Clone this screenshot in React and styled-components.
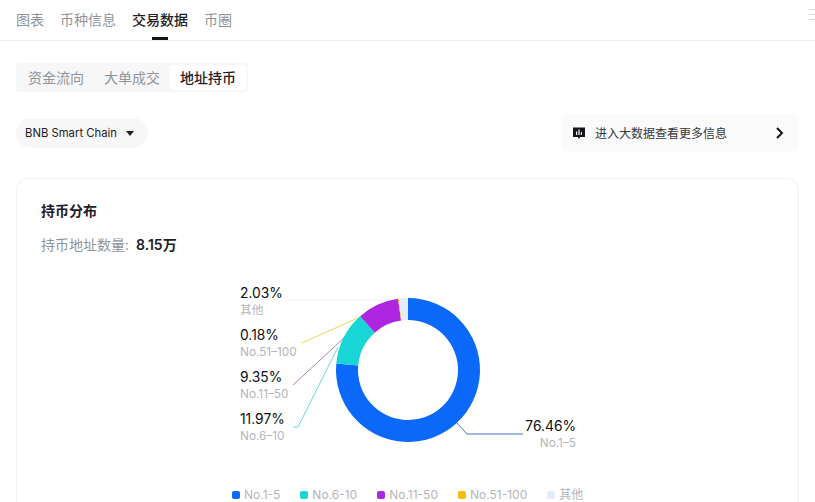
import React from "react"
import styled, { createGlobalStyle } from "styled-components"

const GlobalStyle = createGlobalStyle`
  html, body {
    margin: 0;
    padding: 0;
    width: 815px;
    height: 502px;
    overflow: hidden;
    background: #fff;
    font-family: Inter, "Noto Sans CJK SC", sans-serif;
    color: #1e2026;
  }
  * { box-sizing: border-box; }
`

const Page = styled.div`
  width: 815px;
  height: 502px;
  overflow: hidden;
`

const TopTabs = styled.div`
  position: relative;
  display: flex;
  gap: 16px;
  height: 41px;
  padding-left: 16px;
  border-bottom: 1px solid #eeeff1;
`

const TopTab = styled.div`
  position: relative;
  font-size: 14px;
  line-height: 40px;
  font-weight: ${p => (p.$active ? 500 : 400)};
  color: ${p => (p.$active ? "#1e2026" : "#8f949c")};

  &::after {
    content: "";
    display: ${p => (p.$active ? "block" : "none")};
    position: absolute;
    left: 20px;
    bottom: 0;
    width: 16px;
    height: 3px;
    background: #14151a;
  }
`

const MenuIcon = styled.div`
  position: absolute;
  left: 809px;
  top: 9px;
  width: 8px;
  height: 11px;
  border-top: 1px solid #d6d8db;
  border-bottom: 1px solid #d6d8db;

  &::after {
    content: "";
    position: absolute;
    left: 0;
    right: 0;
    top: 4px;
    height: 1px;
    background: #d6d8db;
  }
`

const Segmented = styled.div`
  display: inline-flex;
  margin: 22px 0 0 16px;
  padding: 2px;
  height: 29px;
  border-radius: 4px;
  background: #f7f7f8;
`

const Segment = styled.div`
  padding: 0 10px;
  font-size: 14px;
  line-height: 25px;
  border-radius: 3px;
  font-weight: ${p => (p.$active ? 500 : 400)};
  color: ${p => (p.$active ? "#1e2026" : "#8f949c")};
  background: ${p => (p.$active ? "#fff" : "transparent")};
`

const Toolbar = styled.div`
  display: flex;
  align-items: center;
  justify-content: space-between;
  margin: 21px 16px 0;
  height: 40px;
`

const ChainSelect = styled.div`
  display: flex;
  align-items: center;
  gap: 9px;
  width: 132px;
  height: 30px;
  padding-left: 9px;
  border-radius: 15px;
  background: #f7f7f8;
  font-size: 11.3px;
  color: #1e2026;
`

const Caret = styled.span`
  width: 0;
  height: 0;
  border-left: 4.5px solid transparent;
  border-right: 4.5px solid transparent;
  border-top: 5px solid #1e2026;
`

const DataLink = styled.div`
  display: flex;
  align-items: center;
  width: 238px;
  height: 38px;
  padding: 0 14px 0 12px;
  border-radius: 6px;
  background: #fafafa;
  font-size: 12px;
  color: #34373d;
`

const LinkLabel = styled.span`
  flex: 1;
  margin-left: 10px;
  margin-top: -1px;
`

const Card = styled.div`
  margin: 25px 16px 0;
  height: 340px;
  padding: 22px 24px 0;
  border: 1px solid #f0f1f2;
  border-radius: 12px;
`

const CardTitle = styled.div`
  font-size: 14px;
  font-weight: 700;
  line-height: 20px;
  color: #1e2026;
`

const CountRow = styled.div`
  display: flex;
  gap: 7px;
  margin-top: 14px;
  font-size: 14px;
  line-height: 20px;
  color: #8f949c;
`

const CountValue = styled.span`
  font-weight: 600;
  font-size: 14px;
  color: #1e2026;
`

const ChartArea = styled.div`
  position: relative;
  width: 783px;
  height: 240px;
  margin: 8px -24px 0;
`

const ChartSvg = styled.svg`
  position: absolute;
  left: 0;
  top: 0;
`

const Callout = styled.div`
  position: absolute;
  left: ${p => p.$x}px;
  top: ${p => p.$y}px;
  text-align: ${p => (p.$right ? "right" : "left")};
  width: ${p => (p.$right ? "60px" : "auto")};
`

const Percent = styled.div`
  font-size: 13.8px;
  line-height: 18px;
  font-weight: 400;
  color: #0c0d10;
  white-space: nowrap;
`

const SubLabel = styled.div`
  font-size: 11.8px;
  line-height: 16px;
  color: #b4b6ba;
  white-space: nowrap;
`

const Legend = styled.div`
  position: absolute;
  left: 215px;
  top: 224px;
  display: flex;
  gap: 20px;
`

const LegendItem = styled.div`
  display: flex;
  align-items: center;
  gap: 4px;
  font-size: 12px;
  line-height: 16px;
  color: #b4b6ba;
  white-space: nowrap;
`

const Swatch = styled.span`
  width: 8px;
  height: 8px;
  border-radius: 2px;
  background: ${p => p.$color};
`

const slices = [
  { value: 76.46, color: "#0a68fa", label: "No.1-5" },
  { value: 11.97, color: "#18d5d6", label: "No.6-10" },
  { value: 9.35, color: "#ad27e2", label: "No.11-50" },
  { value: 0.18, color: "#f5bd0c", label: "No.51-100" },
  { value: 2.03, color: "#e3ecf8", label: "其他" },
]

const callouts = [
  { x: 223, y: 106, pct: "2.03%", sub: "其他" },
  { x: 223, y: 148, pct: "0.18%", sub: "No.51–100" },
  { x: 223, y: 190, pct: "9.35%", sub: "No.11–50" },
  { x: 223, y: 232, pct: "11.97%", sub: "No.6–10" },
  { x: 499, y: 239, pct: "76.46%", sub: "No.1–5", right: true },
]

// chart area starts at x=17, y=263 in page coordinates
const CX = 391
const CY = 107

function arcPath(start, end) {
  const R = 72
  const r = 50
  const pt = (rad, pct) => {
    const a = (pct / 100) * Math.PI * 2
    return `${(CX + rad * Math.sin(a)).toFixed(2)} ${(CY - rad * Math.cos(a)).toFixed(2)}`
  }
  const large = end - start > 50 ? 1 : 0
  return `M${pt(R, start)} A${R} ${R} 0 ${large} 1 ${pt(R, end)} L${pt(r, end)} A${r} ${r} 0 ${large} 0 ${pt(r, start)} Z`
}

function Donut() {
  let acc = 0
  return (
    <ChartSvg width="783" height="240" viewBox="0 0 783 240">
      <polyline points="270,37 385,37" fill="none" stroke="#eef0f3" strokeWidth="1" />
      <polyline points="285,80 343,54" fill="none" stroke="#ecd65c" strokeWidth="1" />
      <polyline points="276,122 328,74" fill="none" stroke="#a883b8" strokeWidth="1" />
      <polyline points="276,164 281,164 321,84" fill="none" stroke="#62dcd8" strokeWidth="1" />
      <polyline points="440,160 450,171 506,171" fill="none" stroke="#3f78c4" strokeWidth="1" />
      {slices.map(s => {
        const d = arcPath(acc, acc + s.value)
        acc += s.value
        return <path key={s.label} d={d} fill={s.color} />
      })}
    </ChartSvg>
  )
}

export default function App() {
  return (
    <Page>
      <GlobalStyle />
      <TopTabs>
        <TopTab>图表</TopTab>
        <TopTab>币种信息</TopTab>
        <TopTab $active>交易数据</TopTab>
        <TopTab>币圈</TopTab>
        <MenuIcon />
      </TopTabs>

      <Segmented>
        <Segment>资金流向</Segment>
        <Segment>大单成交</Segment>
        <Segment $active>地址持币</Segment>
      </Segmented>

      <Toolbar>
        <ChainSelect>
          BNB Smart Chain
          <Caret />
        </ChainSelect>
        <DataLink>
          <svg width="12" height="13" viewBox="0 0 12 13">
            <path d="M0 0.5h12v9.5H7.2L6 12 4.800 10H0z" fill="#14151a" />
            <path d="M3 4.500h1.200V8H3zM5.400 2.500h1.200V8H5.400zM7.800 5h1.200v3H7.800z" fill="#fff" />
          </svg>
          <LinkLabel>进入大数据查看更多信息</LinkLabel>
          <svg width="10" height="12" viewBox="0 0 10 12">
            <path d="M2 1l5 5-5 5" fill="none" stroke="#14151a" strokeWidth="2" />
          </svg>
        </DataLink>
      </Toolbar>

      <Card>
        <CardTitle>持币分布</CardTitle>
        <CountRow>
          持币地址数量:
          <CountValue>8.15万</CountValue>
        </CountRow>
        <ChartArea>
          <Donut />
          {callouts.map(c => (
            <Callout key={c.pct} $x={c.x} $y={c.y - 85} $right={c.right}>
              <Percent>{c.pct}</Percent>
              <SubLabel>{c.sub}</SubLabel>
            </Callout>
          ))}
          <Legend>
            {slices.map(s => (
              <LegendItem key={s.label}>
                <Swatch $color={s.color} />
                {s.label}
              </LegendItem>
            ))}
          </Legend>
        </ChartArea>
      </Card>
    </Page>
  )
}
